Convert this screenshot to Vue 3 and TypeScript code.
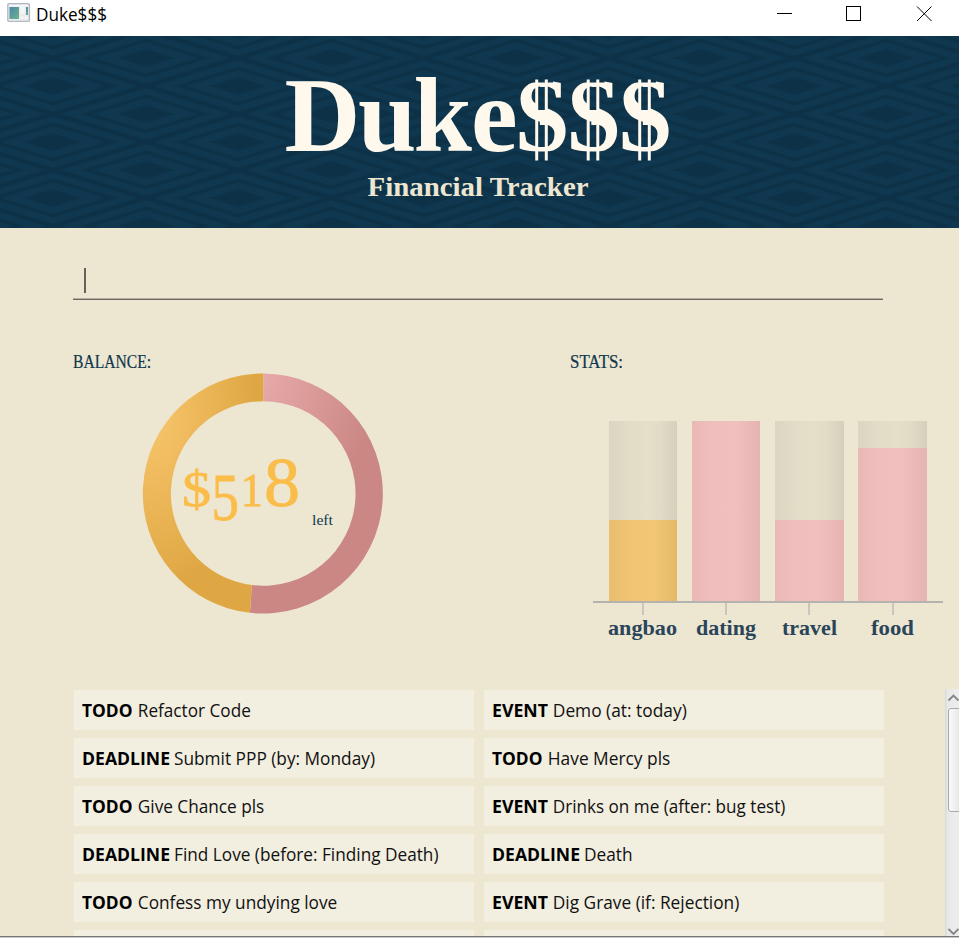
<script setup lang="ts">
interface Task { kind: string; kindWidth: number; text: string; textWidth: number }
interface Stat { label: string; labelWidth: number; fill: number; income?: boolean }

const dollars: number[] = [516, 567.5, 619]

const stats: Stat[] = [
  { label: 'angbao', labelWidth: 69, fill: 81, income: true },
  { label: 'dating', labelWidth: 60, fill: 180 },
  { label: 'travel', labelWidth: 55, fill: 81 },
  { label: 'food', labelWidth: 43, fill: 153.5 },
]

const tasks: Task[] = [
  { kind: 'TODO', kindWidth: 50.5, text: 'Refactor Code', textWidth: 113 },
  { kind: 'EVENT', kindWidth: 56, text: 'Demo (at: today)', textWidth: 134 },
  { kind: 'DEADLINE', kindWidth: 88, text: 'Submit PPP (by: Monday)', textWidth: 201 },
  { kind: 'TODO', kindWidth: 50.5, text: 'Have Mercy pls', textWidth: 122.5 },
  { kind: 'TODO', kindWidth: 50.5, text: 'Give Chance pls', textWidth: 126.5 },
  { kind: 'EVENT', kindWidth: 56, text: 'Drinks on me (after: bug test)', textWidth: 232.5 },
  { kind: 'DEADLINE', kindWidth: 88, text: 'Find Love (before: Finding Death)', textWidth: 264.5 },
  { kind: 'DEADLINE', kindWidth: 88, text: 'Death', textWidth: 48.5 },
  { kind: 'TODO', kindWidth: 50.5, text: 'Confess my undying love', textWidth: 199.5 },
  { kind: 'EVENT', kindWidth: 56, text: 'Dig Grave (if: Rejection)', textWidth: 186.5 },
]

const gap: Record<string, number> = { TODO: 5.3, EVENT: 4.8, DEADLINE: 4 }
const textStart = (t: Task): number => 8 + t.kindWidth + gap[t.kind]
</script>

<template>
  <div class="window">
    <header class="titlebar">
      <svg class="app-icon" width="24" height="20" viewBox="0 0 24 20">
        <defs>
          <linearGradient id="pane" x1="0" y1="0" x2="1" y2="1">
            <stop offset="0" stop-color="#4b86ad" /><stop offset="1" stop-color="#6bb487" />
          </linearGradient>
        </defs>
        <rect x="0.8" y="0.8" width="21.6" height="17.6" rx="1" fill="#e9ebee" stroke="#b4bac3" stroke-width="1.4" />
        <path d="M2 2.5h19" stroke="#f8f9fa" stroke-width="1.5" />
        <rect x="2.5" y="4" width="9.5" height="12" fill="url(#pane)" />
        <rect x="13.5" y="4" width="4" height="7" fill="#f6f6f5" />
        <rect x="19" y="4" width="2" height="8" fill="url(#pane)" />
        <path d="M13.5 13.5h3v2.5h-3zM18 13.5h3v2.5h-3z" fill="#f4f4f3" />
      </svg>
      <svg class="app-name" width="80" height="28">
        <text x="0" y="21" textLength="71" lengthAdjust="spacingAndGlyphs">Duke$$$</text>
      </svg>
      <svg class="controls" width="170" height="28" viewBox="0 0 170 28">
        <path d="M1 13.5h15" /><rect x="70.5" y="6.5" width="14" height="14" /><path d="M141 6.5l14.5 14.5M155.500 6.500L141 21" />
      </svg>
    </header>

    <svg class="banner" width="959" height="192" viewBox="0 0 959 192">
      <defs>
        <pattern id="weave" x="53.1" y="-6" width="185.2" height="56" patternUnits="userSpaceOnUse">
          <rect width="185.2" height="56" fill="#0d3247" />
          <g v-for="[cx, cy] in [[92.6, 28], [0, 0], [185.2, 0], [0, 56], [185.2, 56]]" :key="`${cx}-${cy}`" :transform="`translate(${cx} ${cy})`">
            <path d="M-84 0L0-25.400 84 0 0 25.400z" fill="#0f3850" />
            <path d="M-65 0L0-19.700 65 0 0 19.700z" fill="#0d3247" />
            <path d="M-51.500 0L0-15.600 51.500 0 0 15.600z" fill="#0f3850" />
            <path d="M-29 0L0-9 29 0 0 9z" fill="#0d3247" />
          </g>
        </pattern>
        <mask id="split-stem" maskUnits="userSpaceOnUse" x="0" y="0" width="959" height="192">
          <rect width="959" height="192" fill="#fff" />
          <g v-for="x in dollars" :key="x" fill="#000">
            <rect :x="x + 15" y="30" width="22" height="16.500" />
            <rect :x="x + 21.500" y="51" width="8" height="23" />
            <rect :x="x + 21.500" y="89" width="8" height="22" />
            <rect :x="x + 15" y="115.500" width="22" height="16" />
          </g>
        </mask>
      </defs>
      <rect width="959" height="192" fill="url(#weave)" />
      <text class="logo" mask="url(#split-stem)" y="114.500" x="284.500 358 413.500 471 516 567.500 619">Duke$$$</text>
      <path v-for="x in dollars" :key="x" class="bars-of-dollar" :d="`M${x + 20.700} 43.500v81M${x + 30.300} 43.500v81`" />
      <text class="tagline" x="367.500" y="159.500" textLength="221" lengthAdjust="spacingAndGlyphs">Financial Tracker</text>
    </svg>

    <main class="content">
      <div class="command"><span class="caret"></span></div>

      <div class="panels">
        <section class="balance">
          <svg class="heading" width="100" height="24"><text x="0" y="18" textLength="78" lengthAdjust="spacingAndGlyphs">BALANCE:</text></svg>
          <svg class="donut" width="242" height="242" viewBox="-121 -121 242 242">
            <defs>
              <radialGradient id="gold" gradientUnits="userSpaceOnUse" cx="0" cy="0" r="1" gradientTransform="translate(-112 -78) scale(105 175)">
                <stop offset="0" stop-color="#f6c56c" /><stop offset="0.25" stop-color="#f2be62" /><stop offset="1" stop-color="#dfa743" />
              </radialGradient>
              <radialGradient id="rose" gradientUnits="userSpaceOnUse" cx="0" cy="0" r="1" gradientTransform="translate(-6 -116) scale(120 150)">
                <stop offset="0" stop-color="#e8abab" /><stop offset="1" stop-color="#ca8783" />
              </radialGradient>
            </defs>
            <g transform="translate(0.400 -0.500)">
              <path d="M0-120A120 120 0 1 1-13.500 119.300L-11.500 91.600A92.300 92.300 0 1 0 0-92.300z" fill="url(#rose)" />
              <path d="M0-120A120 120 0 0 0-13.500 119.300L-11.500 91.600A92.300 92.300 0 0 1 0-92.300z" fill="url(#gold)" />
            </g>
            <text class="amount"><tspan x="-81" y="12" font-size="51" textLength="29" lengthAdjust="spacingAndGlyphs">$</tspan><tspan x="-51.500" y="26" font-size="68" textLength="27.500" lengthAdjust="spacingAndGlyphs">5</tspan><tspan x="-22" y="12" font-size="46" textLength="22" lengthAdjust="spacingAndGlyphs">1</tspan><tspan x="1" y="12" font-size="69" textLength="36" lengthAdjust="spacingAndGlyphs">8</tspan></text>
            <text class="left" x="49" y="31" textLength="21" lengthAdjust="spacingAndGlyphs">left</text>
          </svg>
        </section>

        <section class="stats">
          <svg class="heading" width="100" height="24"><text x="0" y="18" textLength="53" lengthAdjust="spacingAndGlyphs">STATS:</text></svg>
          <div class="chart">
            <div v-for="s in stats" :key="s.label" class="track">
              <div class="fill" :class="{ income: s.income }" :style="{ height: s.fill + 'px' }"></div>
            </div>
          </div>
          <div class="labels">
            <div v-for="s in stats" :key="s.label" class="label">
              <i class="tick"></i>
              <svg :width="s.labelWidth" height="26"><text x="0" y="20" :textLength="s.labelWidth" lengthAdjust="spacingAndGlyphs">{{ s.label }}</text></svg>
            </div>
          </div>
        </section>
      </div>

      <div class="list">
        <div class="grid">
          <div v-for="(t, i) in tasks" :key="i" class="task">
            <svg width="400" height="40">
              <text class="kind" x="8" y="27" :textLength="t.kindWidth" lengthAdjust="spacingAndGlyphs">{{ t.kind }}</text>
              <text :x="textStart(t)" y="27" :textLength="t.textWidth" lengthAdjust="spacingAndGlyphs">{{ t.text }}</text>
            </svg>
          </div>
          <div class="task"></div>
          <div class="task"></div>
        </div>
        <div class="scrollbar">
          <svg width="14" height="18"><path d="M3.500 11.500l5-5 5 5" /></svg>
          <div class="thumb"></div>
          <svg width="14" height="10"><path d="M3.500 3l5 5 5-5" /></svg>
        </div>
      </div>
    </main>
  </div>
</template>

<style>
body { margin: 0; overflow: hidden; }
</style>

<style scoped>
.window { width: 959px; height: 938px; display: flex; flex-direction: column; overflow: hidden; box-sizing: border-box; background: #ede6d1; border-bottom: 1px solid #c9c9c9; }
svg { display: block; flex: none; }
.titlebar { height: 36px; flex: none; display: flex; background: #fff; }
.app-icon { margin: 3px 5px 0 7px; }
.app-name text { font: 18px "Open Sans", sans-serif; fill: #000; }
.controls { margin-left: auto; margin-right: 13px; fill: none; stroke: #000; stroke-width: 1; }
.banner { height: 192px; }
.logo { font: bold 105px "Liberation Serif", serif; fill: #fff9ed; }
.bars-of-dollar { stroke: #fff9ed; stroke-width: 3; }
.tagline { font: bold 28px "Liberation Serif", serif; fill: #ede6d1; }
.content { flex: 1; min-height: 0; display: flex; flex-direction: column; border-bottom: 1px solid #777; }
.command { margin: 40px 76.5px 0 72.5px; height: 31px; flex: none; border-bottom: 1px solid #6b6960; box-shadow: 0 -1px #b5b0a2 inset; padding-left: 11.5px; display: flex; align-items: flex-start; }
.caret { width: 2px; height: 25px; background: #65625a; }
.panels { height: 339px; margin-top: 50px; padding-left: 73px; flex: none; display: grid; grid-template-columns: 496.5px 1fr; }
.heading text { font: 18px "Liberation Serif", serif; fill: #0e374e; stroke: #0e374e; stroke-width: 0.2; }
.donut { margin: -1px 0 0 69px; }
.amount { font-family: "Liberation Serif", serif; fill: #fbbd4a; stroke: #fbbd4a; stroke-width: 0.8; }
.left { font: 15px "Liberation Serif", serif; fill: #0e374e; }
.chart { width: 334px; height: 180px; margin: 47px 0 0 23.5px; padding-left: 15.5px; display: flex; align-items: stretch; gap: 14.8px; border-bottom: 2px solid #b5b3b0; }
.track { width: 68.5px; flex: none; display: flex; align-items: flex-end; background: linear-gradient(90deg, #dbd5c1, #e3dcc7 30%, #e4dfc9 55%, #e2dcc7 75%, #d6cfbb); }
.fill { width: 100%; background: linear-gradient(90deg, #e9b9b7, #f0bebd 30%, #f1bfbe 65%, #e5b4b2); }
.fill.income { background: linear-gradient(90deg, #e8be6f, #f0c473 30%, #f2c674 65%, #e3b969); }
.labels { display: flex; gap: 14.8px; margin-left: 39px; }
.label { width: 68.5px; flex: none; display: flex; flex-direction: column; align-items: center; }
.tick { width: 2px; height: 12px; background: #cac6bd; }
.label svg { overflow: visible; }
.label text { font: bold 22px "Liberation Serif", serif; fill: #2a4559; }
.list { flex: 1; min-height: 0; display: flex; overflow: hidden; }
.grid { margin: 1px 61px 0 74px; display: grid; grid-template-columns: 400px 400px; grid-auto-rows: 40px; gap: 8px 10px; }
.task { background: #f2eee0; }
.task text { font: 18px "Open Sans", sans-serif; fill: #111; }
.task .kind { font-weight: 700; fill: #000; }
.scrollbar { width: 14px; flex: none; display: flex; flex-direction: column; background: linear-gradient(90deg, #d9d9d9, #e9e9e9 20%, #ededed); }
.scrollbar path { fill: none; stroke: #858585; stroke-width: 1.8; }
.thumb { height: 104px; margin: 1px -4px auto 3px; box-sizing: border-box; border: 1px solid #aaa; border-radius: 3px; background: linear-gradient(90deg, #fafafa, #e2e2e2); }
</style>
